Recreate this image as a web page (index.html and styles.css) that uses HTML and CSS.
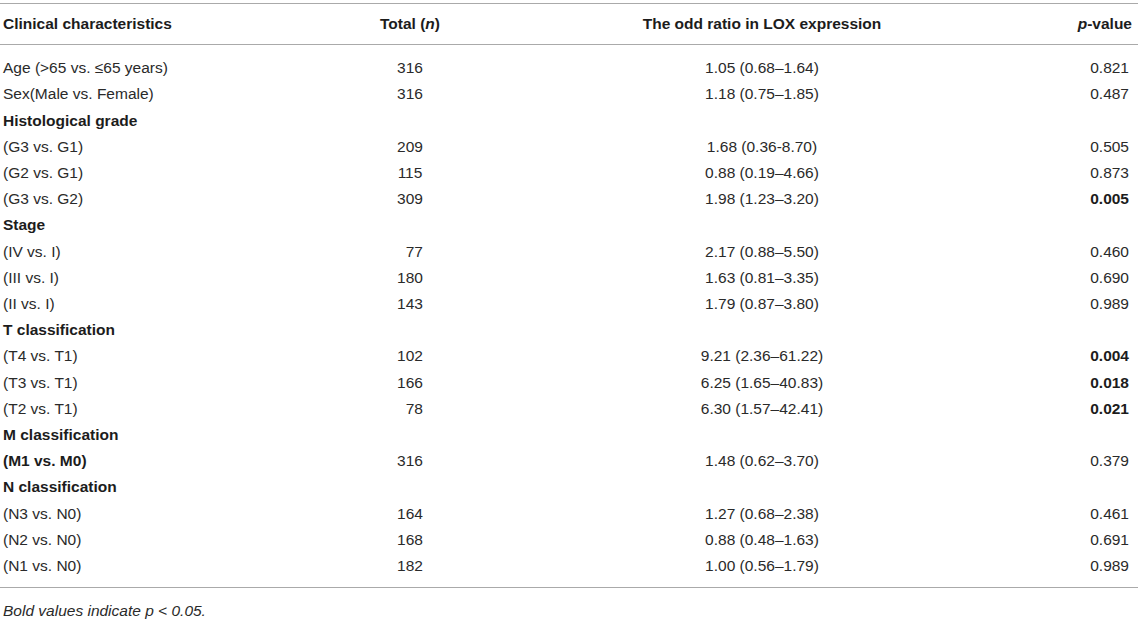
FILE: index.html
```html
<!DOCTYPE html>
<html lang="en">
<head>
  <meta charset="UTF-8" />
  <meta name="viewport" content="width=device-width, initial-scale=1.0" />
  <title>LOX expression and clinical characteristics</title>
  <link rel="stylesheet" href="styles.css">
</head>
<body>
  <div class="table-wrap">
    <table class="data">
      <colgroup>
        <col class="c-label">
        <col class="c-total">
        <col class="c-odds">
        <col class="c-p">
      </colgroup>
      <thead>
        <tr>
          <th class="label">Clinical characteristics</th>
          <th class="total">Total (<i>n</i>)</th>
          <th class="odds">The odd ratio in LOX expression</th>
          <th class="pval"><i>p</i>-value</th>
        </tr>
      </thead>
      <tbody>
        <tr class="first">
          <td class="label">Age (&gt;65 vs. &le;65 years)</td>
          <td class="total">316</td>
          <td class="odds">1.05 (0.68–1.64)</td>
          <td class="pval">0.821</td>
        </tr>
        <tr>
          <td class="label">Sex(Male vs. Female)</td>
          <td class="total">316</td>
          <td class="odds">1.18 (0.75–1.85)</td>
          <td class="pval">0.487</td>
        </tr>
        <tr class="group">
          <td class="label">Histological grade</td>
          <td></td><td></td><td></td>
        </tr>
        <tr>
          <td class="label">(G3 vs. G1)</td>
          <td class="total">209</td>
          <td class="odds">1.68 (0.36-8.70)</td>
          <td class="pval">0.505</td>
        </tr>
        <tr>
          <td class="label">(G2 vs. G1)</td>
          <td class="total">115</td>
          <td class="odds">0.88 (0.19–4.66)</td>
          <td class="pval">0.873</td>
        </tr>
        <tr>
          <td class="label">(G3 vs. G2)</td>
          <td class="total">309</td>
          <td class="odds">1.98 (1.23–3.20)</td>
          <td class="pval"><b>0.005</b></td>
        </tr>
        <tr class="group">
          <td class="label">Stage</td>
          <td></td><td></td><td></td>
        </tr>
        <tr>
          <td class="label">(IV vs. I)</td>
          <td class="total">&#8199;77</td>
          <td class="odds">2.17 (0.88–5.50)</td>
          <td class="pval">0.460</td>
        </tr>
        <tr>
          <td class="label">(III vs. I)</td>
          <td class="total">180</td>
          <td class="odds">1.63 (0.81–3.35)</td>
          <td class="pval">0.690</td>
        </tr>
        <tr>
          <td class="label">(II vs. I)</td>
          <td class="total">143</td>
          <td class="odds">1.79 (0.87–3.80)</td>
          <td class="pval">0.989</td>
        </tr>
        <tr class="group">
          <td class="label">T classification</td>
          <td></td><td></td><td></td>
        </tr>
        <tr>
          <td class="label">(T4 vs. T1)</td>
          <td class="total">102</td>
          <td class="odds">9.21 (2.36–61.22)</td>
          <td class="pval"><b>0.004</b></td>
        </tr>
        <tr>
          <td class="label">(T3 vs. T1)</td>
          <td class="total">166</td>
          <td class="odds">6.25 (1.65–40.83)</td>
          <td class="pval"><b>0.018</b></td>
        </tr>
        <tr>
          <td class="label">(T2 vs. T1)</td>
          <td class="total">&#8199;78</td>
          <td class="odds">6.30 (1.57–42.41)</td>
          <td class="pval"><b>0.021</b></td>
        </tr>
        <tr class="group">
          <td class="label">M classification</td>
          <td></td><td></td><td></td>
        </tr>
        <tr>
          <td class="label"><b>(M1 vs. M0)</b></td>
          <td class="total">316</td>
          <td class="odds">1.48 (0.62–3.70)</td>
          <td class="pval">0.379</td>
        </tr>
        <tr class="group">
          <td class="label">N classification</td>
          <td></td><td></td><td></td>
        </tr>
        <tr>
          <td class="label">(N3 vs. N0)</td>
          <td class="total">164</td>
          <td class="odds">1.27 (0.68–2.38)</td>
          <td class="pval">0.461</td>
        </tr>
        <tr>
          <td class="label">(N2 vs. N0)</td>
          <td class="total">168</td>
          <td class="odds">0.88 (0.48–1.63)</td>
          <td class="pval">0.691</td>
        </tr>
        <tr class="last">
          <td class="label">(N1 vs. N0)</td>
          <td class="total">182</td>
          <td class="odds">1.00 (0.56–1.79)</td>
          <td class="pval">0.989</td>
        </tr>
      </tbody>
    </table>
    <p class="note"><i>Bold values indicate p &lt; 0.05.</i></p>
  </div>
</body>
</html>
```

FILE: styles.css
```css
body {
  margin: 0;
  padding: 3px 0 0;
  background: #fff;
  color: #2a2a2a;
  font-family: "Liberation Sans", Arial, sans-serif;
  font-size: 15.5px;
}
.table-wrap {
  width: 1138px;
}
.data {
  width: 100%;
  border-collapse: collapse;
  table-layout: fixed;
}
.c-label { width: 340px; }
.c-total { width: 140px; }
.c-odds { width: 564px; }
.c-p { width: 94px; }

th, td {
  padding: 4px 0;
  line-height: 18.2px;
  white-space: nowrap;
}
thead th {
  padding: 11px 0;
  font-weight: bold;
  color: #1c1c1c;
  border-top: 1px solid #aaa;
  border-bottom: 1px solid #aaa;
}
.label { text-align: left; padding-left: 3px; }
.total { text-align: center; }
.odds { text-align: center; }
.pval { text-align: right; padding-right: 6px; }
td.pval { padding-right: 9px; }

tr.first td { padding-top: 14px; }
tr.last td { padding-bottom: 12px; }
tbody tr:last-child td { border-bottom: 1px solid #aaa; }

tr.group .label,
td b {
  font-weight: bold;
  color: #1c1c1c;
}

.note {
  margin: 0;
  padding: 14px 3px 0;
  line-height: 18px;
  color: #2a2a2a;
}
```
